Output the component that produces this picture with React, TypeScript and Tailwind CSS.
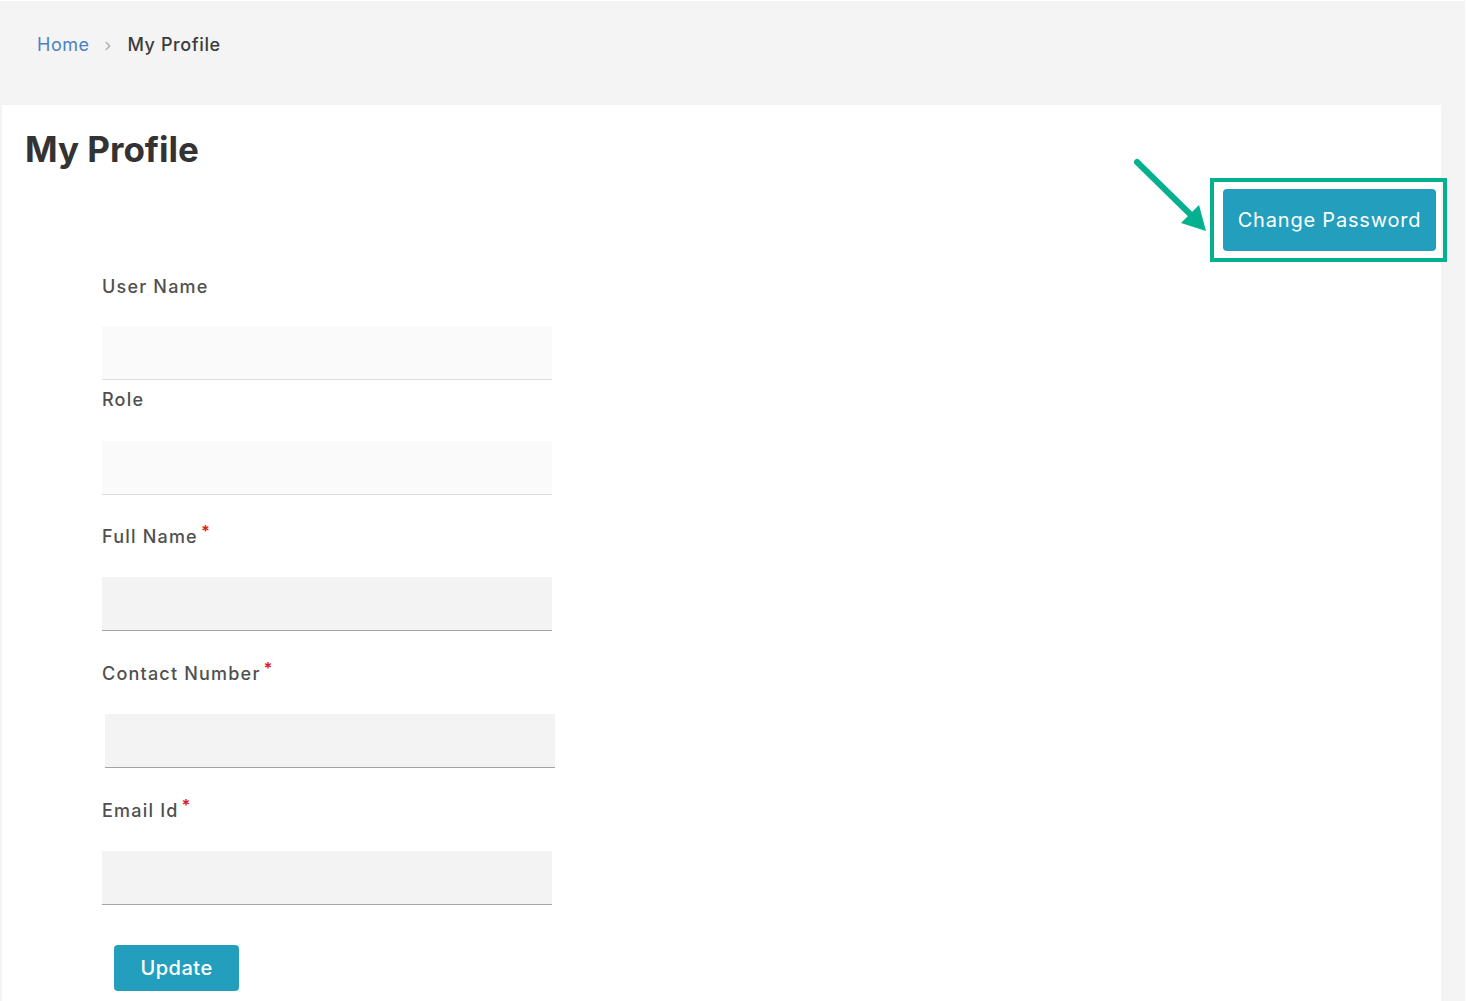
import { ChevronRight } from "lucide-react";

const font = { fontFamily: "Inter, 'Open Sans', sans-serif" };

type FieldProps = {
  label: string;
  required?: boolean;
  filled?: boolean;
  className?: string;
  inputClass?: string;
};

function Field({ label, required, filled, className = "", inputClass = "" }: FieldProps) {
  return (
    <div className={className}>
      <label className="flex items-start h-[26px] text-[18px] leading-[26px] font-medium tracking-[1.2px] text-[#505050]">
        {label}
        {required && <span className="ml-[3px] -mt-[6px] text-[16px] font-bold text-[#e31b1b]">*</span>}
      </label>
      <input
        type="text"
        className={
          "block w-[450px] h-[54px] outline-none border-b " +
          (filled ? "bg-[#f3f3f3] border-[#a3a3a3] " : "bg-[#fafafa] border-[#dcdcdc] ") +
          inputClass
        }
      />
    </div>
  );
}

export default function App() {
  return (
    <div className="min-h-screen bg-white" style={font}>
      <div className="mt-px w-[1465px] min-h-[1000px] bg-[#f4f4f4]">
        {/* Breadcrumb */}
        <nav className="h-[104px] pl-[37px] pt-[31px] flex items-start gap-[12px] text-[18px] leading-[26px]">
          <span className="tracking-[0.5px] text-[#4a82c4]">Home</span>
          <ChevronRight size={14} strokeWidth={2.5} className="mt-[7px] text-[#b0b0b0]" />
          <span className="font-medium tracking-[0.6px] text-[#3b3b3b]">My Profile</span>
        </nav>

        {/* Card */}
        <div className="ml-[2px] w-[1439px] min-h-[896px] bg-white pt-[24px]">
          <div className="flex justify-between items-start pl-[23px]">
            <h1 className="text-[35px] leading-[40px] font-bold text-[#333333]">My Profile</h1>
            <div className="relative mt-[49px] -mr-[6px] border-[4px] border-[#05b08e] pl-[9px] pr-[7px] py-[7px]">
              <svg
                className="absolute -left-[84px] -top-[27px]"
                width="80"
                height="80"
                viewBox="0 0 80 80"
              >
                <line x1="7" y1="7" x2="60" y2="59" stroke="#05b08e" strokeWidth="6" strokeLinecap="round" />
                <polygon points="76,76 51,68 69,50" fill="#05b08e" />
              </svg>
              <button className="w-[213px] h-[62px] rounded-[4px] bg-[#239fbd] text-white text-[20px] tracking-[0.8px]">
                Change Password
              </button>
            </div>
          </div>

          <form className="pl-[100px] mt-[12px] pb-[10px]">
            <Field label="User Name" inputClass="mt-[26px]" />
            <Field label="Role" className="mt-[7px]" inputClass="mt-[28px]" />
            <Field label="Full Name" required filled className="mt-[29px]" inputClass="mt-[27px]" />
            <Field label="Contact Number" required filled className="mt-[30px]" inputClass="mt-[27px] ml-[3px]" />
            <Field label="Email Id" required filled className="mt-[30px]" inputClass="mt-[27px]" />
            <button
              type="button"
              className="mt-[40px] ml-[12px] w-[125px] h-[46px] rounded-[4px] bg-[#239fbd] text-white text-[20px] font-medium tracking-[0.5px]"
            >
              Update
            </button>
          </form>
        </div>
      </div>
    </div>
  );
}
